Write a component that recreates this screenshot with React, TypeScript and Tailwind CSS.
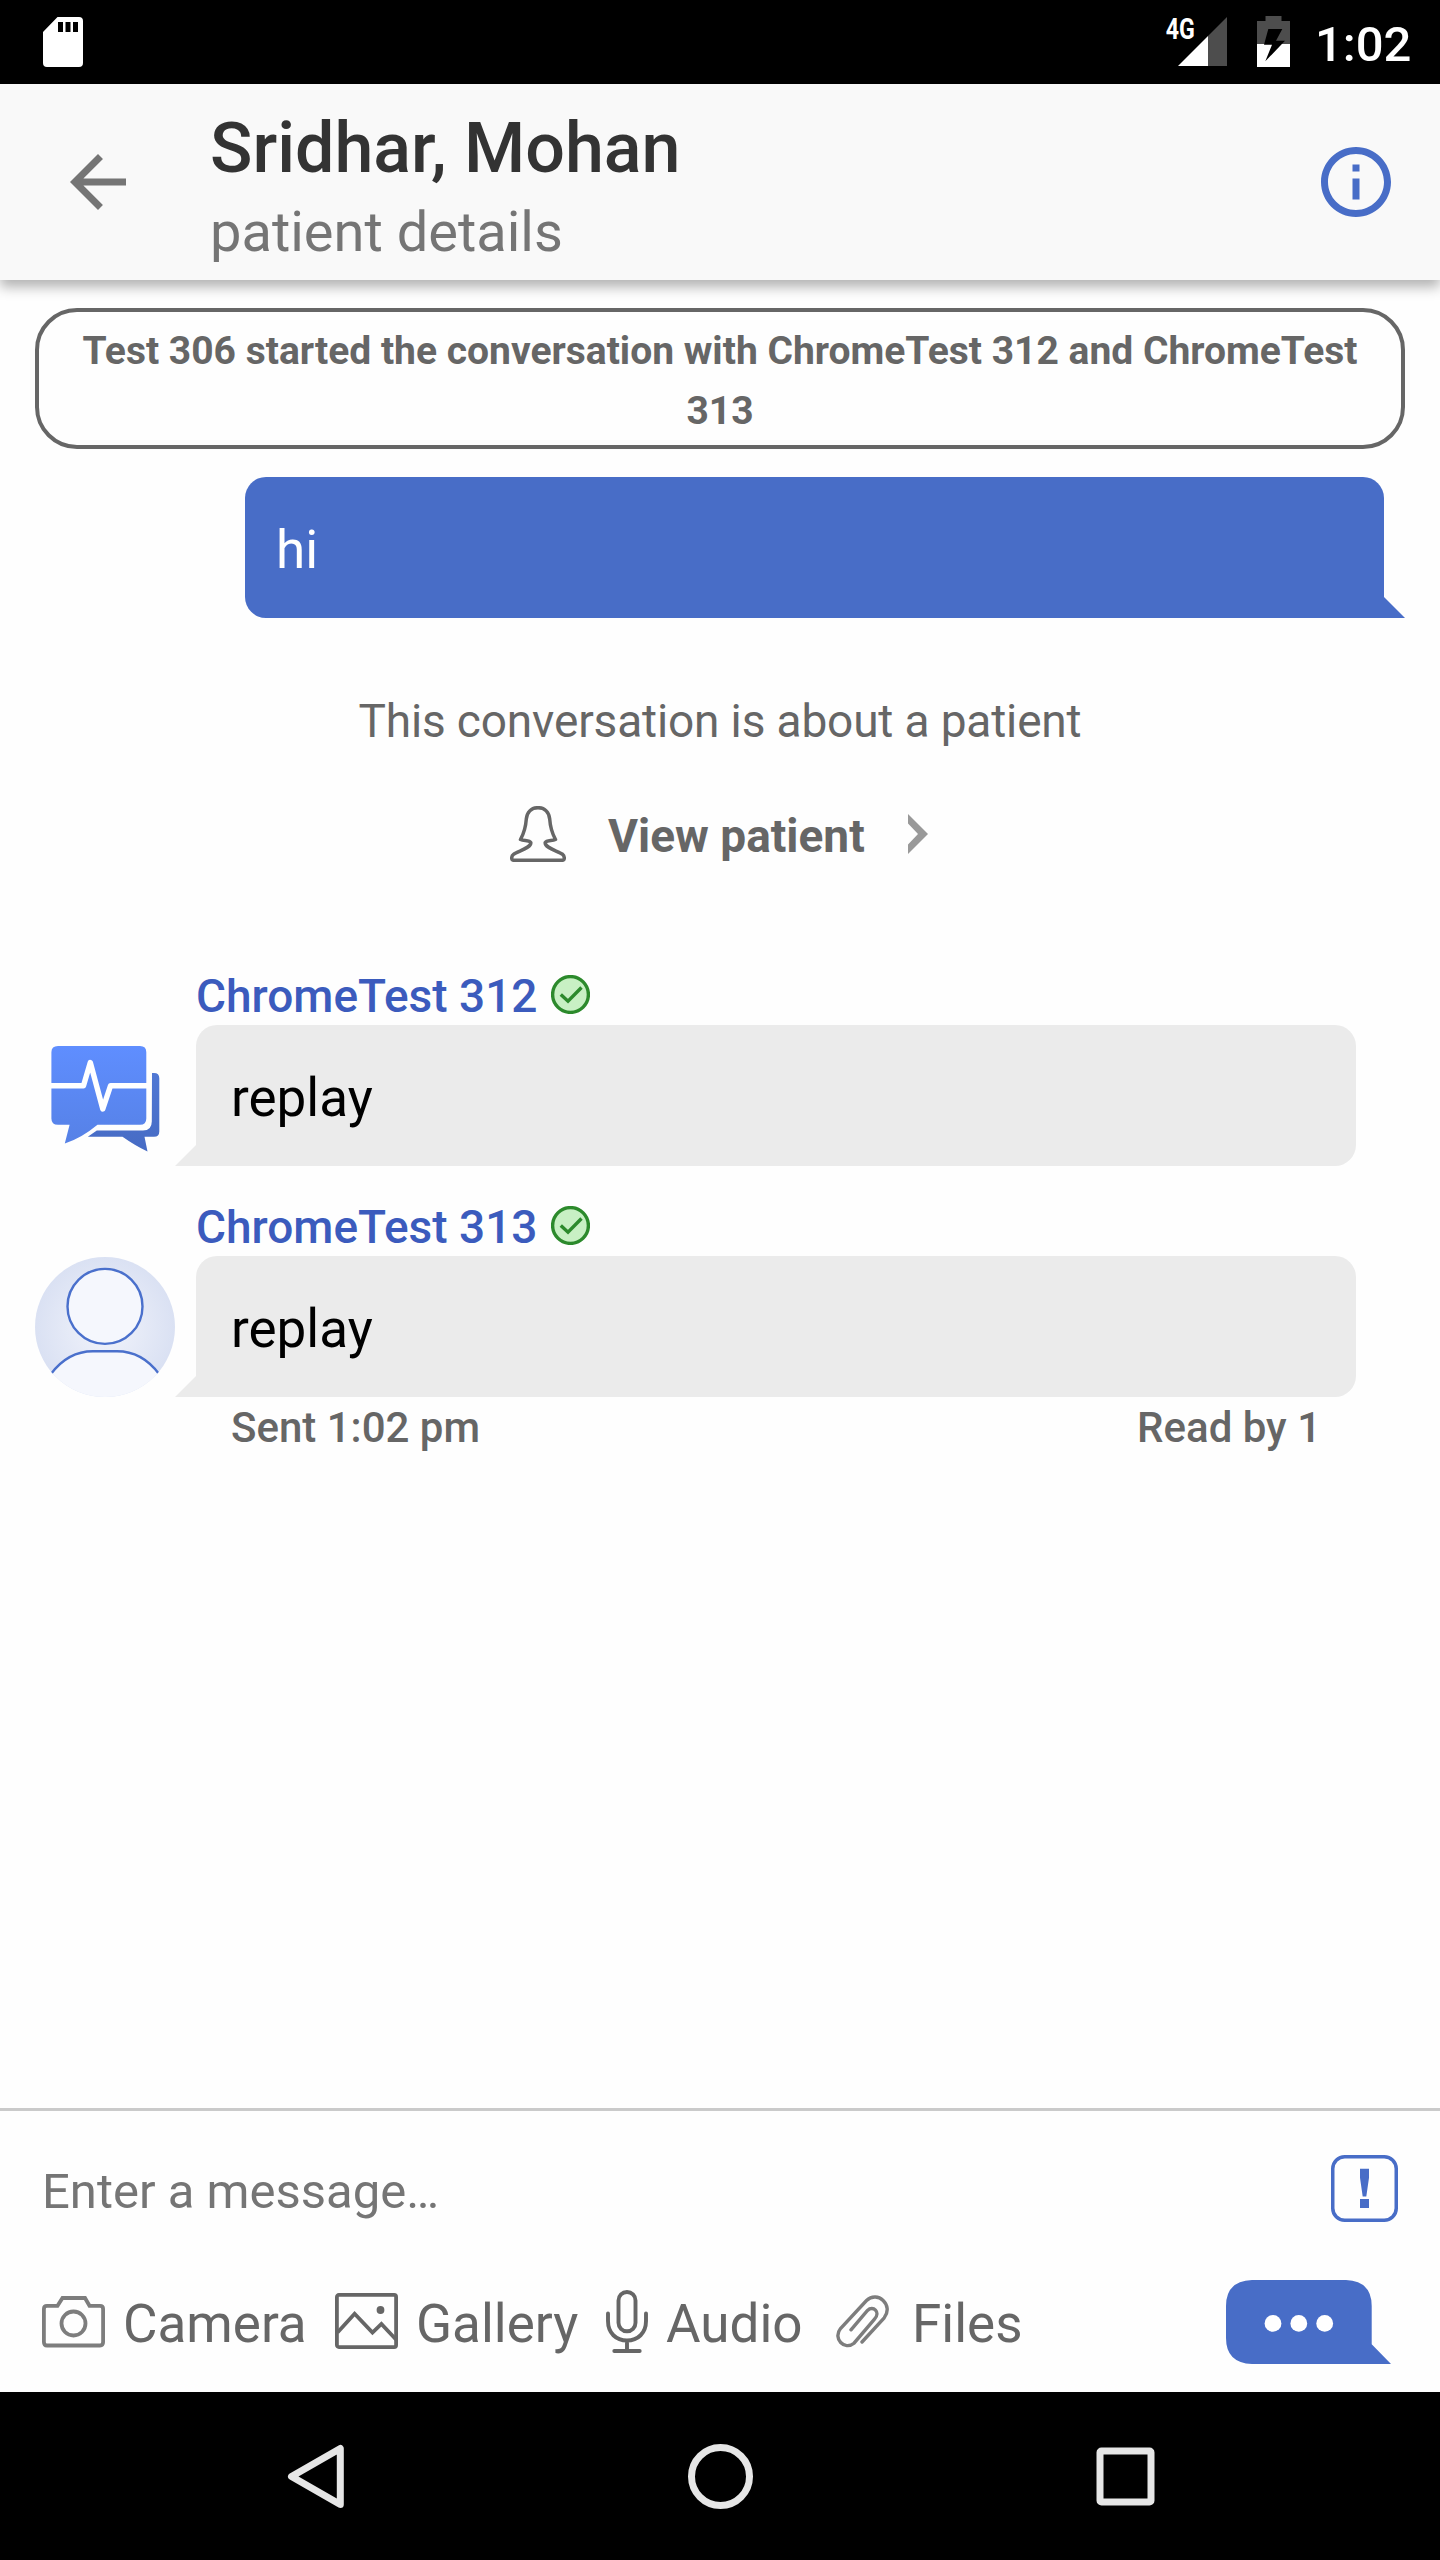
import React from "react";

function StatusBar() {
  return (
    <div className="flex h-[84px] shrink-0 bg-black text-white">
      <svg className="ml-[43px] mt-[17px] h-[50px] w-[40px]" viewBox="0 0 40 50">
        <path
          fill="#fff"
          fillRule="evenodd"
          d="M14.500 0H36q4 0 4 4v42q0 4-4 4H4q-4 0-4-4V15ZM15 5v10h5V5ZM22.500 5v10h5V5ZM30 5v10h5V5Z"
        />
      </svg>
      <div className="flex-1" />
      <span className="mt-[15px] w-[44px] origin-left scale-x-[0.8] pl-px text-[29px] font-bold leading-[29px]">4G</span>
      <svg className="-ml-[31px] mt-[17px] h-[49px] w-[49px]" viewBox="0 0 49 49">
        <path fill="#4d4d4d" d="M49 0v49H30V19Z" />
        <path fill="#fff" d="M30 19v30H0Z" />
      </svg>
      <svg className="ml-[30px] mt-[16px] h-[51px] w-[33px]" viewBox="0 0 33 51">
        <path fill="#4d4d4d" d="M8.500 0h16v5H33v23H0V5h8.500Z" />
        <path fill="#fff" d="M0 28h33v23H0Z" />
        <path d="M11.300 13h14L19 24.700h9L8.300 45.300 15 28.700H7Z" fill="#000" />
      </svg>
      <span className="ml-[25px] mr-[29px] mt-[20px] w-[96px] whitespace-nowrap text-[49px] font-medium leading-[49px]">1:02</span>
    </div>
  );
}

function Header() {
  return (
    <header className="relative z-10 flex h-[196px] shrink-0 bg-[#f9f9f9] pl-[56px] pr-[42px] shadow-[0_7px_12px_rgba(0,0,0,0.3)]">
      <svg className="mt-[56px] h-[84px] w-[84px]" viewBox="0 0 24 24" fill="#757575">
        <path d="M20 11H7.830l5.590-5.590L12 4l-8 8 8 8 1.410-1.410L7.830 13H20v-2z" />
      </svg>
      <div className="ml-[70px] flex-1 whitespace-nowrap pt-[29px]">
        <h1 className="text-[70px] font-medium leading-[70px] text-[#333333]">Sridhar, Mohan</h1>
        <p className="mt-[21px] text-[56px] leading-[56px] text-[#757575]">patient details</p>
      </div>
      <svg className="mt-[56px] h-[84px] w-[84px]" viewBox="0 0 24 24" fill="#486dc7">
        <path d="M11 7h2v2h-2zm0 4h2v6h-2zm1-9C6.480 2 2 6.480 2 12s4.480 10 10 10 10-4.480 10-10S17.520 2 12 2zm0 18c-4.410 0-8-3.590-8-8s3.590-8 8-8 8 3.590 8 8-3.590 8-8 8z" />
      </svg>
    </header>
  );
}

function VerifiedBadge() {
  return (
    <svg className="ml-[14px] mt-px h-[39px] w-[39px]" viewBox="0 0 39 39">
      <circle cx="19.500" cy="19.500" r="17.900" fill="#c8f0c4" stroke="#2c8a2c" strokeWidth="3.400" />
      <path d="M9.800 19.500 17 26.200 30.500 12.500" fill="none" stroke="#2c8a2c" strokeWidth="3.400" />
    </svg>
  );
}

function BrandAvatar() {
  return (
    <svg className="h-[140px] w-[140px]" viewBox="0 0 140 140">
      <defs>
        <linearGradient id="front" x1="0" y1="0" x2="0" y2="1">
          <stop offset="0" stopColor="#5f8eff" />
          <stop offset="1" stopColor="#5681e6" />
        </linearGradient>
        <linearGradient id="back" x1="0" y1="0" x2="0" y2="1">
          <stop offset="0" stopColor="#5078d4" />
          <stop offset="1" stopColor="#466bc4" />
        </linearGradient>
      </defs>
      <path
        fill="url(#back)"
        d="M117 47h2q5.300 0 5.300 5.300V105.500q0 5.300-5.300 5.300H109.500l3 14.700q-12-5.500-25-14.700H52.800l9-6.300H108q8.800 0 8.800-9Z"
      />
      <path
        fill="url(#front)"
        d="M23 20h82q6.300 0 6.300 6.300V92.500q0 6.300-6.300 6.300H62.500Q46 112.500 29.800 117.500L34.600 98.800H23q-6.600 0-6.600-6.300V26.300q0-6.300 6.600-6.300Z"
      />
      <path
        d="M16 59.800H48.500L55.300 36.500 67.800 83 75.500 59.800H112"
        fill="none"
        stroke="#fff"
        strokeWidth="5.400"
        strokeLinejoin="round"
      />
    </svg>
  );
}

function PersonAvatar() {
  return (
    <svg className="h-[140px] w-[140px]" viewBox="0 0 140 140">
      <defs>
        <radialGradient id="disc">
          <stop offset="0" stopColor="#f2f4fb" />
          <stop offset="1" stopColor="#dae1f3" />
        </radialGradient>
        <clipPath id="round">
          <circle cx="70" cy="70" r="70" />
        </clipPath>
      </defs>
      <circle cx="70" cy="70" r="70" fill="url(#disc)" />
      <g clipPath="url(#round)" fill="#f5f7fd">
        <path d="M16 116Q33 94.300 58 94.300H82Q107 94.300 124 116V140H16Z" />
        <path d="M16 117Q33 94.300 58 94.300H82Q107 94.300 124 117" stroke="#4a70cc" strokeWidth="2.400" />
        <circle cx="70" cy="49.400" r="37.500" stroke="#4a70cc" strokeWidth="2.400" />
      </g>
    </svg>
  );
}

function Incoming({ name, text, avatar }: { name: string; text: string; avatar: React.ReactNode }) {
  return (
    <div className="flex items-end pl-[35px]">
      {avatar}
      <div className="h-[21px] w-[21px] bg-[#ebebeb] [clip-path:polygon(100%_0,100%_100%,0_100%)]" />
      <div className="w-[1160px]">
        <div className="flex h-[51px] items-start">
          <span className="-mt-px whitespace-nowrap text-[46px] font-medium leading-[46px] text-[#3b5bbd]">{name}</span>
          <VerifiedBadge />
        </div>
        <div className="h-[141px] rounded-[21px] rounded-bl-none bg-[#ebebeb] pl-[35px] pt-[47px] text-[53px] leading-[53px] text-black">
          {text}
        </div>
      </div>
    </div>
  );
}

function Conversation() {
  return (
    <main className="flex-1 bg-[#fefefe] pt-[28px]">
      <div className="mx-[35px] h-[141px] whitespace-nowrap rounded-[42px] border-4 border-[#666666] pt-[9px] text-center text-[39px] font-bold leading-[60px] text-[#666666]">
        Test 306 started the conversation with ChromeTest 312 and ChromeTest
        <br />
        313
      </div>

      <div className="mt-[28px] flex items-end pl-[245px]">
        <div className="h-[141px] w-[1139px] rounded-[21px] rounded-br-none bg-[#486dc7] pl-[31px] pt-[47px] text-[53px] leading-[53px] text-white">
          hi
        </div>
        <div className="h-[21px] w-[21px] bg-[#486dc7] [clip-path:polygon(0_0,100%_100%,0_100%)]" />
      </div>

      <p className="mt-[80px] text-center text-[46px] leading-[46px] tracking-[-0.150px] text-[#666666]">This conversation is about a patient</p>

      <div className="mt-[60px] flex h-[60px] pl-[510px]">
        <svg className="mt-[2px] h-[56px] w-[56px]" viewBox="0 0 56 56" fill="none" stroke="#666666" strokeWidth="3.500" strokeLinejoin="round">
          <path d="M28 1.700C21 1.700 17 6.500 16.300 13C15.700 22 13.500 28 10.500 33.500C14 35 19.500 34 20.800 36.500C21.500 42 8 45 3.500 48.300C1.800 49.500 1.700 51 1.700 52.300Q1.700 54.300 3.700 54.300H52.300Q54.300 54.300 54.300 52.300C54.300 51 54.200 49.500 52.500 48.300C48 45 34.500 42 35.200 36.500C36.500 34 42 35 45.500 33.500C42.500 28 40.300 22 39.700 13C39 6.500 35 1.700 28 1.700Z" />
        </svg>
        <span className="ml-[42px] mt-[9px] w-[260px] whitespace-nowrap text-[46px] font-bold leading-[46px] text-[#666666]">View patient</span>
        <svg className="ml-[40px] mt-[10px] h-[40px] w-[20px]" viewBox="0 0 20 40">
          <path d="M0 0 20 20 0 40V30.500L10 20 0 9.500Z" fill="#999999" />
        </svg>
      </div>

      <div className="mt-[110px]">
        <Incoming name="ChromeTest 312" text="replay" avatar={<BrandAvatar />} />
      </div>
      <div className="mt-[39px]">
        <Incoming name="ChromeTest 313" text="replay" avatar={<PersonAvatar />} />
      </div>

      <div className="ml-[231px] mt-[10px] flex w-[1090px] justify-between whitespace-nowrap text-[42px] font-medium leading-[42px] text-[#666666]">
        <span>Sent 1:02 pm</span>
        <span>Read by 1</span>
      </div>
    </main>
  );
}

function Composer() {
  return (
    <footer className="h-[284px] shrink-0 border-t-[3px] border-[#cacaca] bg-[#fefefe]">
      <div className="flex pl-[42px] pt-[44px]">
        <span className="mt-[12px] w-[1289px] text-[49px] leading-[49px] text-[#757575]">Enter a message…</span>
        <svg className="h-[67px] w-[67px]" viewBox="0 0 67 67">
          <rect x="1.750" y="1.750" width="63.500" height="63.500" rx="12" fill="none" stroke="#486dc7" strokeWidth="3.500" />
          <path fill="#486dc7" d="M29 13.700h9v9L35.300 41.500h-3.600L29 22.700ZM29 44h9v9h-9Z" />
        </svg>
      </div>

      <div className="mt-[58px] flex h-[84px] whitespace-nowrap pl-[42px] text-[53px] leading-[53px] text-[#666666]">
        <svg className="mt-[16px] h-[52px] w-[63px]" viewBox="0 0 63 52" fill="none" stroke="#7d7d7d" strokeWidth="3.800">
          <path d="M5 9.800H15.500L20.500 2H43L47.500 9.800H58Q61.100 9.800 61.100 13V46Q61.100 49.500 58 49.500H5Q1.900 49.500 1.900 46V13Q1.900 9.800 5 9.800Z" />
          <circle cx="31.500" cy="27.500" r="12" />
        </svg>
        <span className="ml-[18px] mt-[18px] w-[212px]">Camera</span>
        <svg className="mt-[13px] h-[56px] w-[63px]" viewBox="0 0 63 56" fill="none" stroke="#666666" strokeWidth="3.800">
          <rect x="1.900" y="1.900" width="59.200" height="52.200" rx="2" />
          <path d="M2.500 39.500 19.600 20.700 37.500 39.500 46.400 31 61 46.500" />
          <circle cx="45.500" cy="17" r="3.900" fill="#666666" stroke="none" />
        </svg>
        <span className="ml-[18px] mt-[18px] w-[190px]">Gallery</span>
        <svg className="mt-[10px] h-[63px] w-[42px]" viewBox="0 0 42 63" fill="none" stroke="#666666" strokeWidth="3.900" strokeLinecap="round">
          <rect x="12.500" y="2" width="17" height="39.300" rx="8.500" />
          <path d="M2 23.500V31C2 43 10 50.500 21 50.500S40 43 40 31V23.500M21 50.500V61M8.300 61H33.700" />
        </svg>
        <span className="ml-[18px] mt-[18px] w-[170px]">Audio</span>
        <svg className="mt-[15px] h-[53px] w-[53px]" viewBox="0 0 53 53" fill="none" stroke="#7d7d7d" strokeWidth="3.400" strokeLinecap="round">
          <path d="M26 47 48.200 22.800C58 10 41.500-5 30.500 5.500L4.500 33.500C-3.500 43.500 8.500 56 18 48.200L38.500 24.200C45 17 37 10 31.500 15.500L15 34.800" />
        </svg>
        <span className="ml-[23px] mt-[18px] w-[200px]">Files</span>
        <svg className="ml-[114px] h-[84px] w-[165px]" viewBox="0 0 165 84">
          <path fill="#486dc7" d="M26 0H120Q145.700 1 145.700 26V64.300L165 84H26Q0 83 0 58V26Q0 1 26 0Z" />
          <circle cx="47" cy="43.400" r="8.400" fill="#fff" />
          <circle cx="72.800" cy="43.400" r="8.400" fill="#fff" />
          <circle cx="98.700" cy="43.400" r="8.400" fill="#fff" />
        </svg>
      </div>
    </footer>
  );
}

function NavigationBar() {
  return (
    <nav className="flex h-[168px] shrink-0 items-start bg-black pl-[287px] pt-[52px]">
      <svg className="h-[65px] w-[57px]" viewBox="0 0 57 65">
        <path d="M53.300 4.500V60.500L4.500 32.500Z" fill="none" stroke="#e6e6e6" strokeWidth="7" strokeLinejoin="round" />
      </svg>
      <svg className="ml-[344px] h-[65px] w-[65px]" viewBox="0 0 65 65">
        <circle cx="32.500" cy="32.500" r="29" fill="none" stroke="#e6e6e6" strokeWidth="7" />
      </svg>
      <svg className="ml-[343px] mt-[3px] h-[59px] w-[59px]" viewBox="0 0 59 59">
        <rect x="4" y="4" width="51" height="51" rx="1.500" fill="none" stroke="#e6e6e6" strokeWidth="7" />
      </svg>
    </nav>
  );
}

export default function App() {
  return (
    <div className="flex h-[2560px] w-[1440px] flex-col overflow-hidden bg-[#fefefe] font-['Roboto',sans-serif]">
      <StatusBar />
      <Header />
      <Conversation />
      <Composer />
      <NavigationBar />
    </div>
  );
}
